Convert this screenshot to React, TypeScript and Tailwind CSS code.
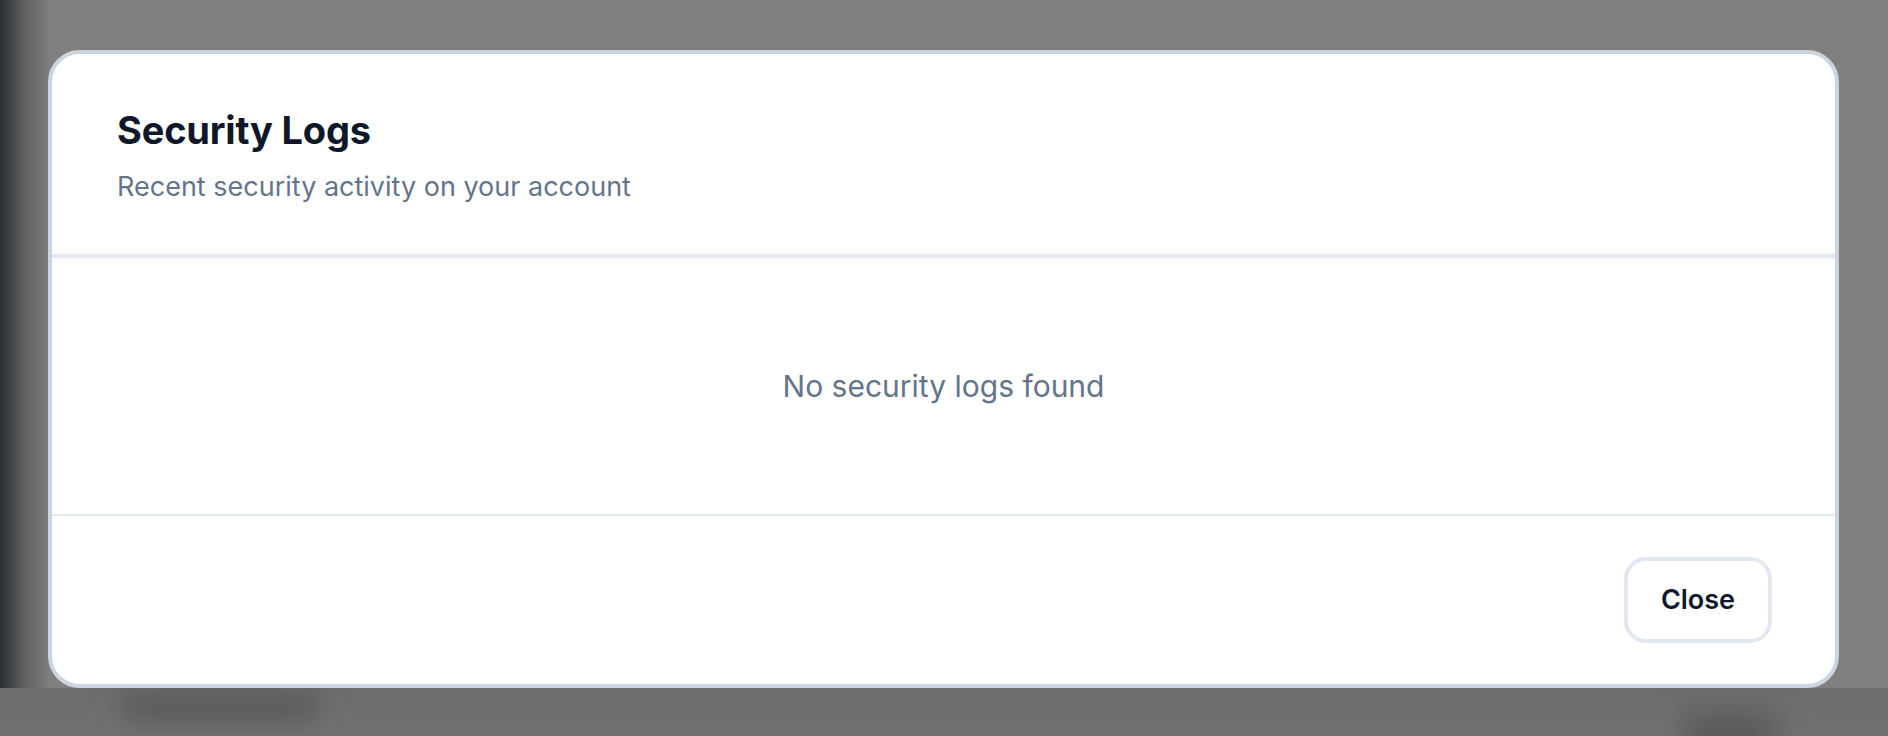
export default function App() {
  return (
    <div className="relative h-[736px] w-full overflow-hidden bg-[#7f7f7f] font-['Inter',sans-serif]">
      {/* Blurred page underneath the overlay */}
      <div className="absolute inset-y-0 left-0 w-[48px] bg-gradient-to-r from-[#2a2d32] via-[#5f6061] to-[#7c7c7c]" />
      <div className="absolute inset-x-0 bottom-0 h-[48px] bg-gradient-to-b from-[#6c6c6c] to-[#727272]" />
      <div className="absolute left-[120px] top-[692px] h-[30px] w-[200px] rounded-full bg-[#5a5b5c] blur-[12px]" />
      <div className="absolute left-[1680px] top-[712px] h-[40px] w-[100px] rounded-full bg-[#58595a] blur-[14px]" />

      {/* Dialog */}
      <div className="relative pl-[48px] pr-[49px] pt-[50px]">
        <div className="flex h-[638px] flex-col overflow-hidden rounded-[32px] border-4 border-[#cbd5e1] bg-white">
          <div className="h-[204px] border-b-4 border-[#e2e8f0] px-[65px] pt-[53px]">
            <h2 className="text-[38px] font-bold leading-[46px] tracking-[-0.005em] text-[#0f172a]">
              Security Logs
            </h2>
            <p className="mt-[14px] text-[27px] leading-[40px] text-[#64748b]">
              Recent security activity on your account
            </p>
          </div>

          <div className="flex h-[258px] items-center justify-center border-b-2 border-[#e2e8f0]">
            <p className="text-[30px] leading-[44px] text-[#64748b]">No security logs found</p>
          </div>

          <div className="flex flex-1 items-center justify-end pr-[63px]">
            <button className="h-[86px] w-[148px] rounded-[22px] border-4 border-[#e2e8f0] bg-white text-[27px] font-semibold text-[#0f172a]">
              Close
            </button>
          </div>
        </div>
      </div>
    </div>
  )
}
